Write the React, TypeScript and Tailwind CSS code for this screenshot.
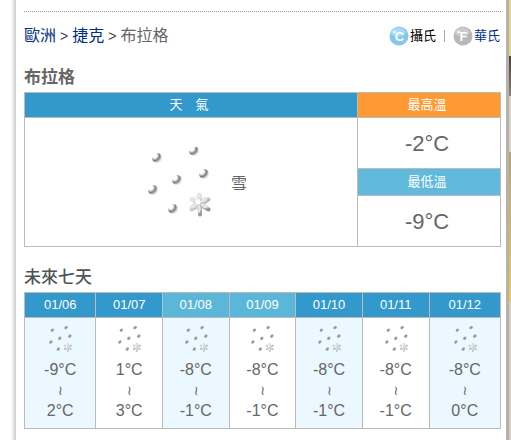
import { clsx } from "clsx";

const flakes = [
  [10, 11],
  [47, 4],
  [30, 33],
  [57, 27],
  [6, 43],
  [26, 62],
];

const petals = [0, 60, 120, 180, 240, 300];

const days = [
  { date: "01/06", low: "-9°C", high: "2°C", width: "w-[15%]" },
  { date: "01/07", low: "1°C", high: "3°C", width: "w-[14%]" },
  { date: "01/08", low: "-8°C", high: "-1°C", width: "w-[14%]", weekend: true },
  { date: "01/09", low: "-8°C", high: "-1°C", width: "w-[14%]", weekend: true },
  { date: "01/10", low: "-8°C", high: "-1°C", width: "w-[14%]" },
  { date: "01/11", low: "-8°C", high: "-1°C", width: "w-[14%]" },
  { date: "01/12", low: "-8°C", high: "0°C", width: "w-[15%]" },
];

function SnowIcon({ className, small }: { className: string; small?: boolean }) {
  return (
    <svg viewBox="0 0 64 70" className={className} aria-hidden="true">
      <defs>
        <radialGradient id="flake-ball" cx="0.25" cy="0.25" r="0.75">
          <stop offset="0.3" stopColor="#fff" />
          <stop offset="0.68" stopColor="#7c7c7c" />
          <stop offset="1" stopColor="#e8e8e8" />
        </radialGradient>
        <linearGradient id="flake-shade" gradientUnits="userSpaceOnUse" x1="-8" y1="-10" x2="8" y2="10">
          <stop offset="0.2" stopColor="#f2f2f2" />
          <stop offset="0.9" stopColor="#8c8c8c" />
        </linearGradient>
      </defs>
      {flakes.map(([x, y]) =>
        small ? (
          <ellipse key={`${x}-${y}`} cx={x + 1} cy={y + 1} rx="5" ry="3.8" fill="#989c9f" transform={`rotate(-40 ${x} ${y})`} />
        ) : (
          <circle key={`${x}-${y}`} cx={x} cy={y} r="5" fill="url(#flake-ball)" />
        )
      )}
      <g transform="translate(52 56)">
        <g transform="translate(1 1.5)">
          <path
            d="M0-10L0 10M-8.5-5L8.5 5M-8.5 5L8.5-5"
            stroke={small ? "#a3a7aa" : "url(#flake-shade)"}
            strokeLinecap="round"
            strokeWidth="4"
          />
        </g>
        {petals.map((angle) => (
          <g key={angle} transform={`rotate(${angle})`}>
            <path d="M0-1.5C-2.8-5-2.2-7.5 0-10C2.2-7.5 2.8-5 0-1.5Z" fill="#f7f7f7" stroke="#bbb" strokeWidth="0.5" />
            <path d="M0-4V-7.5" stroke="#c4c4c4" strokeWidth="0.8" />
          </g>
        ))}
        <circle cx="-1" cy="-1" r="2.6" fill="#fff" />
      </g>
    </svg>
  );
}

function UnitIcon({ letter, color, light }: { letter: string; color: string; light: string }) {
  return (
    <svg viewBox="0 0 20 20" className="size-5" aria-hidden="true">
      <circle cx="10" cy="10" r="9.5" fill={color} />
      <ellipse cx="9" cy="6" rx="7.5" ry="4.5" fill={light} opacity="0.5" />
      <circle cx="5.5" cy="6" r="1.3" fill="#fff" />
      <text
        x="10.5"
        y="14.5"
        textAnchor="middle"
        fill="#fff"
        fontSize="13"
        fontWeight="700"
        fontFamily="Liberation Sans, sans-serif"
      >
        {letter}
      </text>
    </svg>
  );
}

export default function App() {
  return (
    <div className="flex min-h-screen bg-white font-['Liberation_Sans','Noto_Sans_CJK_TC',sans-serif] text-[#666]">
      <div className="w-4 shrink-0 bg-linear-to-r from-white from-70% to-[#c9ccd0]" />

      <main className="min-w-0 flex-1 pt-[11px] pr-[5px] pl-2">
        <div className="border-t border-dotted border-[#999]" />

        <div className="flex h-[47px] items-center justify-between">
          <nav className="flex gap-1 text-base">
            <a href="#europe" className="text-[#003087]">歐洲</a>
            <span className="text-sm leading-6 text-[#444]">&gt;</span>
            <a href="#czech" className="text-[#003087]">捷克</a>
            <span className="text-sm leading-6 text-[#444]">&gt;</span>
            <span>布拉格</span>
          </nav>
          <div className="flex items-center pr-px text-[13px]">
            <UnitIcon letter="C" color="#82c9ec" light="#c9eafa" />
            <span className="ml-px text-black">攝氏</span>
            <span className="mx-2 h-3 w-px bg-[#aaa]" />
            <UnitIcon letter="F" color="#b8b8b8" light="#dedede" />
            <a href="#fahrenheit" className="ml-px text-[#003087]">華氏</a>
          </div>
        </div>

        <h1 className="mt-1 h-[29px] text-[17px] leading-[30px] font-bold">布拉格</h1>
        <table className="w-full table-fixed border-collapse border border-[#bbb] text-center">
          <colgroup>
            <col className="w-[70%]" />
            <col className="w-[30%]" />
          </colgroup>
          <tbody>
            <tr className="h-[25px] text-[13px] leading-5 text-white">
              <th className="border border-[#bbb] bg-[#3399cc] p-0 pr-1 font-normal">天　氣</th>
              <th className="border border-[#bbb] bg-[#ff9933] p-0 pr-1 font-normal">最高溫</th>
            </tr>
            <tr className="h-[51px]">
              <td rowSpan={3} className="border border-[#bbb] p-0">
                <div className="flex items-center justify-center gap-5 pl-3">
                  <SnowIcon className="h-[70px] w-16" />
                  <span className="pt-1 text-base">雪</span>
                </div>
              </td>
              <td className="border border-[#bbb] p-0 pr-1 text-[22px]">-2°C</td>
            </tr>
            <tr className="h-[27px] text-[13px] leading-5 text-white">
              <th className="border border-[#bbb] bg-[#61b9dc] p-0 pr-1 font-normal">最低溫</th>
            </tr>
            <tr className="h-[51px]">
              <td className="border border-[#bbb] p-0 pr-1 text-[22px]">-9°C</td>
            </tr>
          </tbody>
        </table>

        <h2 className="mt-4 h-[29px] text-[17px] leading-[30px] font-medium text-[#4d5558]">未來七天</h2>
        <table className="w-full table-fixed border-collapse border border-[#bbb] text-center">
          <thead>
            <tr className="h-[25px] text-[13px] leading-5 text-white">
              {days.map((day) => (
                <th
                  key={day.date}
                  className={clsx(
                    "border border-[#bbb] p-0 font-normal",
                    day.width,
                    day.weekend ? "bg-[#5bb7da]" : "bg-[#3399cc]"
                  )}
                >
                  {day.date}
                </th>
              ))}
            </tr>
          </thead>
          <tbody>
            <tr className="align-top text-base">
              {days.map((day) => (
                <td key={day.date} className="h-[111px] border border-[#bbb] p-0 pt-2 odd:bg-[#ebf8ff]">
                  <SnowIcon small className="mx-auto h-[26px] w-6" />
                  <div className="mt-2 leading-5">{day.low}</div>
                  <div className="font-['DejaVu_Sans',sans-serif] text-[13px] leading-[21px]">≀</div>
                  <div className="leading-5">{day.high}</div>
                </td>
              ))}
            </tr>
          </tbody>
        </table>
      </main>

      {/* Page edge */}
      <div className="w-[3px] shrink-0 bg-[#b5b2ae]" />
      <div className="flex w-0.5 shrink-0 flex-col">
        <div className="h-14 bg-[#e3d58c]" />
        <div className="h-10 bg-linear-to-b from-[#4a4238] to-[#8a8178]" />
        <div className="h-14 bg-[#d8d3c8]" />
        <div className="h-[150px] bg-linear-to-b from-[#b3a477] to-[#e8c95c]" />
        <div className="flex-1 bg-[#d6cec0]" />
      </div>
    </div>
  );
}
